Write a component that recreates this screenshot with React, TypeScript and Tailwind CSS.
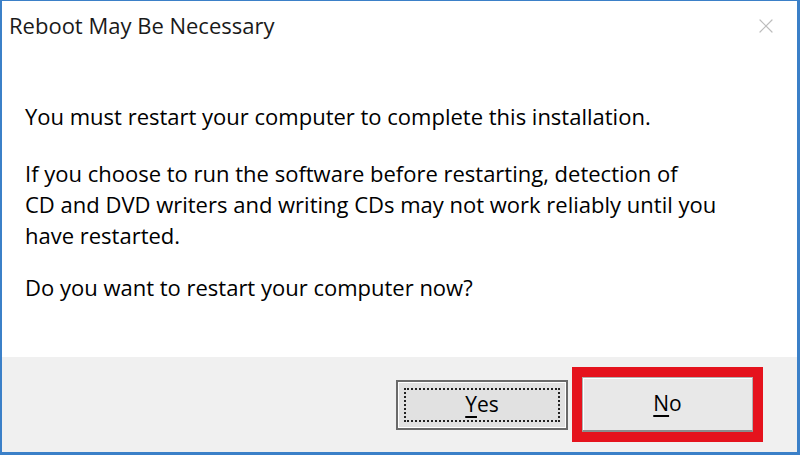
import { X } from "lucide-react"

export default function App() {
    return (
        <div className="w-[800px] h-[455px] flex flex-col bg-white border-t border-l-2 border-r-[3px] border-b-[3px] border-[#3b80c8] font-['Open_Sans',sans-serif] text-black">
            {/* Title bar */}
            <div className="h-[49px] flex items-center justify-between pl-[7px] pr-[19px]">
                <span className="text-[22px] text-[#1a1a1a]">Reboot May Be Necessary</span>
                <X className="w-[24px] h-[24px] text-[#bdbdbd]" strokeWidth={1.2} />
            </div>

            {/* Message */}
            <div className="flex-1 pl-[23px] pt-[51px] text-[22px] leading-[31px]">
                <p>You must restart your computer to complete this installation.</p>
                <p className="mt-[26px]">
                    If you choose to run the software before restarting, detection of
                    <br />
                    CD and DVD writers and writing CDs may not work reliably until you
                    <br />
                    have restarted.
                </p>
                <p className="mt-[21px]">Do you want to restart your computer now?</p>
            </div>

            {/* Buttons */}
            <div className="h-[95px] bg-[#f0f0f0] flex items-center justify-end gap-[4px] pr-[34px]">
                <button className="relative w-[172px] h-[50px] bg-[#e1e1e1] border-2 border-[#6a6a6a] shadow-[inset_0_0_0_1px_#ffffff] text-[21px]">
                    <span className="absolute inset-[6px] border-2 border-dotted border-[#222]" />
                    <span className="underline underline-offset-[4px] decoration-2">Y</span>es
                </button>
                <div className="w-[191px] h-[75px] border-[10px] border-[#e5131d]">
                    <button className="w-full h-full bg-[#e8e8e8] border border-[#b0b0b0] border-b-2 border-b-[#8c8c8c] shadow-[inset_1px_1px_0_#ffffff] text-[21px]">
                        <span className="underline underline-offset-[4px] decoration-2">N</span>o
                    </button>
                </div>
            </div>
        </div>
    )
}
